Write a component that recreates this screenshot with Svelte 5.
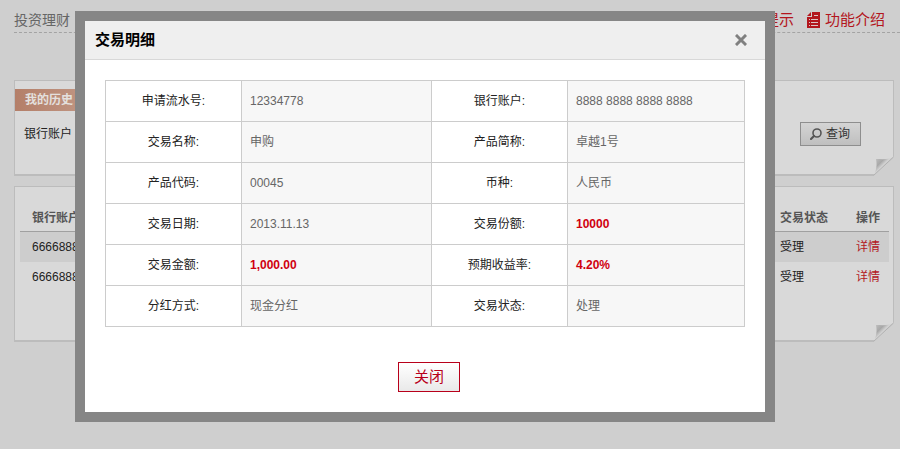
<script lang="ts">
	type Field = { label: string; value: string; strong?: boolean };

	const rows: Field[][] = [
		[
			{ label: '申请流水号', value: '12334778' },
			{ label: '银行账户', value: '8888 8888 8888 8888' }
		],
		[
			{ label: '交易名称', value: '申购' },
			{ label: '产品简称', value: '卓越1号' }
		],
		[
			{ label: '产品代码', value: '00045' },
			{ label: '币种', value: '人民币' }
		],
		[
			{ label: '交易日期', value: '2013.11.13' },
			{ label: '交易份额', value: '10000', strong: true }
		],
		[
			{ label: '交易金额', value: '1,000.00', strong: true },
			{ label: '预期收益率', value: '4.20%', strong: true }
		],
		[
			{ label: '分红方式', value: '现金分红' },
			{ label: '交易状态', value: '处理' }
		]
	];

	const records = [
		{ account: '66668888', status: '受理' },
		{ account: '66668888', status: '受理' }
	];

	let open = $state(true);

	function close() {
		open = false;
	}
</script>

{#snippet curl(id: string)}
	<svg class="curl" viewBox="0 0 21 20" aria-hidden="true">
		<defs>
			<linearGradient {id} gradientUnits="userSpaceOnUse" x1="3" y1="3" x2="11" y2="11">
				<stop offset="0" stop-color="#bdbdbd" />
				<stop offset="0.5" stop-color="#a8a8a8" />
				<stop offset="0.85" stop-color="#d6d6d6" />
				<stop offset="1" stop-color="#bcbcbc" />
			</linearGradient>
		</defs>
		<path d="M21 0V20H0Z" fill="#cfcfcf" />
		<path d="M20.5 1C15 4 9 3 3 3C4 8 4 14 0.5 19.5Z" fill="url(#{id})" />
		<path d="M20.5 1L0.5 19.5" stroke="#a9a9a9" stroke-width="0.8" />
	</svg>
{/snippet}

<div class="page">
	<header class="topbar">
		<span class="crumb">投资理财</span>
		<nav class="links">
			<a href="#tips">提示</a>
			<a href="#intro">
				<svg class="doc" viewBox="0 0 13 16" aria-hidden="true">
					<path d="M5 0H13V16H0V5H5Z" fill="#b3161d" />
					<path d="M0 4L4 0V4Z" fill="#b3161d" />
					<path d="M2 7.5H3M4 7.5H11M2 10.5H3M4 10.5H11M2 13.5H3M4 13.5H11M7 3.5H11" stroke="#dcc5c5" />
				</svg>
				功能介绍
			</a>
		</nav>
	</header>

	<section class="panel search">
		<h2>我的历史</h2>
		<div class="filter">
			<span>银行账户</span>
			<button type="button" class="query">
				<svg viewBox="0 0 12 12" aria-hidden="true">
					<circle cx="7" cy="5" r="4" fill="none" stroke="#555" stroke-width="1.6" />
					<path d="M4 8L1 11" stroke="#555" stroke-width="2.2" stroke-linecap="round" />
				</svg>
				查询
			</button>
		</div>
		{@render curl('fold-search')}
	</section>

	<section class="panel results">
		<table class="records">
			<thead>
				<tr>
					<th>银行账户</th>
					<th class="status">交易状态</th>
					<th class="action">操作</th>
				</tr>
			</thead>
			<tbody>
				{#each records as record}
					<tr>
						<td>{record.account}</td>
						<td>{record.status}</td>
						<td><a href="#detail">详情</a></td>
					</tr>
				{/each}
			</tbody>
		</table>
		{@render curl('fold-results')}
	</section>
</div>

{#if open}
	<div class="overlay">
		<div class="dialog" role="dialog" aria-modal="true" aria-labelledby="dialog-title">
			<div class="dialog-head">
				<h1 id="dialog-title">交易明细</h1>
				<button type="button" class="dismiss" aria-label="关闭窗口" onclick={close}>
					<svg viewBox="0 0 12 12" aria-hidden="true">
						<path d="M2 2L10 10M10 2L2 10" stroke="#808080" stroke-width="3" stroke-linecap="square" />
					</svg>
				</button>
			</div>
			<div class="dialog-body">
				<table class="detail">
					<colgroup>
						<col class="c-label" />
						<col class="c-value" />
						<col class="c-label" />
						<col />
					</colgroup>
					<tbody>
						{#each rows as row}
							<tr>
								{#each row as field}
									<th scope="row">{field.label}:</th>
									<td class:strong={field.strong}>{field.value}</td>
								{/each}
							</tr>
						{/each}
					</tbody>
				</table>
				<div class="actions">
					<button type="button" class="close" onclick={close}>关闭</button>
				</div>
			</div>
		</div>
	</div>
{/if}

<style>
	:global(body) {
		margin: 0;
		background: #cfcfcf;
	}

	.page,
	.overlay,
	button {
		font-family: 'Liberation Sans', 'Noto Sans CJK SC', sans-serif;
		font-size: 12px;
		line-height: 18px;
	}

	.page {
		padding-left: 14px;
		color: #222;
	}

	a {
		color: #b3161d;
		text-decoration: none;
	}

	.topbar {
		display: flex;
		justify-content: space-between;
		align-items: center;
		height: 24px;
		padding: 8px 15px 0 0;
		border-bottom: 1px dashed #a3a3a3;
	}

	.crumb {
		font-size: 14px;
		color: #666;
	}

	.links {
		display: flex;
		gap: 13px;
		font-size: 15px;
	}

	.links a {
		display: flex;
		align-items: center;
		gap: 5px;
	}

	.doc {
		width: 13px;
		height: 16px;
	}

	.panel {
		position: relative;
		box-sizing: border-box;
		margin-right: 6px;
		border: 1px solid #bcbcbc;
		border-bottom-width: 2px;
		background: #d9d9d9;
	}

	.curl {
		position: absolute;
		right: -1px;
		bottom: -2px;
		width: 21px;
		height: 20px;
	}

	.search {
		margin-top: 47px;
		padding: 8px 0 28px;
	}

	h2 {
		width: fit-content;
		margin: 0;
		padding: 2px 30px 2px 10px;
		background: linear-gradient(90deg, #b47f69, #c39b89);
		color: #e4e0de;
		font-size: 12px;
		line-height: 18px;
	}

	.filter {
		display: flex;
		justify-content: space-between;
		align-items: center;
		padding: 11px 32px 0 9px;
	}

	.query {
		display: flex;
		align-items: center;
		gap: 4px;
		height: 24px;
		padding: 0 10px 0 9px;
		border: 1px solid #8e8e8e;
		background: linear-gradient(#d4d4d4, #bfbfbf);
		color: #333;
	}

	.query svg,
	.dismiss svg {
		display: block;
		width: 12px;
		height: 12px;
	}

	.results {
		margin-top: 10px;
		padding: 18px 4px 48px 5px;
	}

	.records {
		width: 100%;
		border-collapse: collapse;
		table-layout: fixed;
	}

	.records th {
		height: 26px;
		padding: 0 0 0 12px;
		border-bottom: 1px solid #a0a0a0;
		color: #555;
		text-align: left;
	}

	.records .status {
		width: 64px;
	}

	.records .action {
		width: 33px;
	}

	.records td {
		height: 30px;
		padding: 0 0 0 12px;
	}

	.records tbody tr:first-child {
		background: #cdcdcd;
	}

	.overlay {
		position: absolute;
		inset: 0;
		padding: 11px 125px 0 75px;
	}

	.dialog {
		border: 10px solid #868686;
		background: #fff;
	}

	.dialog-head {
		display: flex;
		justify-content: space-between;
		align-items: center;
		height: 38px;
		padding: 0 18px 0 10px;
		border-bottom: 1px solid #d8d8d8;
		background: #efefef;
	}

	h1 {
		margin: 0;
		color: #000;
		font-size: 15px;
		line-height: 20px;
	}

	.dismiss {
		padding: 0;
		border: 0;
		background: none;
	}

	.dialog-body {
		padding: 20px;
	}

	.detail {
		width: 100%;
		border-collapse: collapse;
		table-layout: fixed;
	}

	.c-label {
		width: 136px;
	}

	.c-value {
		width: 190px;
	}

	.detail th,
	.detail td {
		box-sizing: border-box;
		height: 41px;
		padding: 0 8px;
		border: 1px solid #ccc;
	}

	.detail th {
		color: #222;
		font-weight: normal;
	}

	.detail td {
		background: #f7f7f7;
		color: #666;
	}

	.detail .strong {
		color: #d0000f;
		font-weight: bold;
	}

	.actions {
		display: flex;
		justify-content: center;
		padding: 35px 0 0 8px;
	}

	.close {
		height: 30px;
		padding: 0 15px;
		border: 1px solid #b8001a;
		background: linear-gradient(#fff, #e9e9e9);
		color: #b8001a;
		font-size: 15px;
	}
</style>
